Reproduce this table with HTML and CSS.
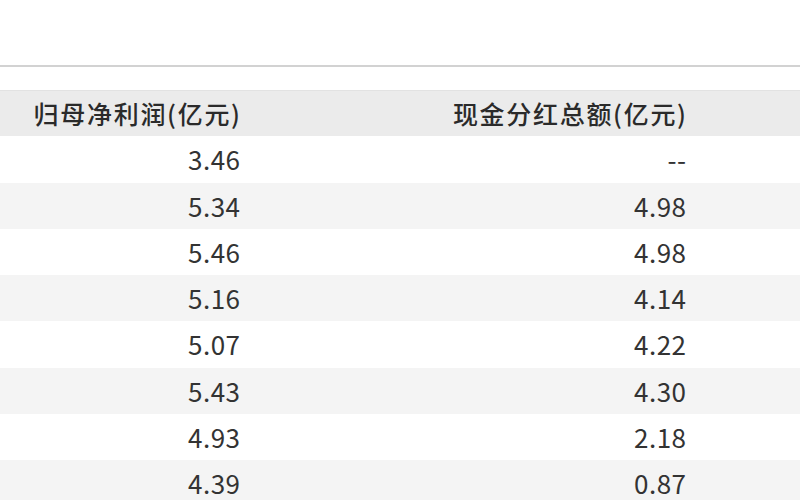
FILE: index.html
```html
<!DOCTYPE html>
<html lang="zh-CN">
<head>
<meta charset="utf-8">
<link rel="stylesheet" href="styles.css">
</head>
<body>
<div class="page">
  <div class="top"></div>
  <div class="rule"></div>
  <div class="table">
    <div class="row head"><div class="c1">归母净利润(亿元)</div><div class="c2">现金分红总额(亿元)</div><div class="c3"></div></div>
    <div class="row"><div class="c1">3.46</div><div class="c2">--</div><div class="c3"></div></div>
    <div class="row alt"><div class="c1">5.34</div><div class="c2">4.98</div><div class="c3"></div></div>
    <div class="row"><div class="c1">5.46</div><div class="c2">4.98</div><div class="c3"></div></div>
    <div class="row alt"><div class="c1">5.16</div><div class="c2">4.14</div><div class="c3"></div></div>
    <div class="row"><div class="c1">5.07</div><div class="c2">4.22</div><div class="c3"></div></div>
    <div class="row alt"><div class="c1">5.43</div><div class="c2">4.30</div><div class="c3"></div></div>
    <div class="row"><div class="c1">4.93</div><div class="c2">2.18</div><div class="c3"></div></div>
    <div class="row alt"><div class="c1">4.39</div><div class="c2">0.87</div><div class="c3"></div></div>
  </div>
</div>
</body>
</html>
```
FILE: styles.css
```css
html, body {
  margin: 0;
  padding: 0;
  background: #ffffff;
}
.page {
  width: 800px;
  height: 500px;
  overflow: hidden;
  font-family: "Noto Sans CJK SC", "Noto Sans", sans-serif;
  color: #333333;
}
.top {
  height: 65px;
}
.rule {
  height: 2px;
  background: #d2d2d2;
}
.table {
  margin-top: 23px;
}
.row {
  display: grid;
  grid-template-columns: 248px 446px 1fr;
  height: 46.25px;
  align-items: center;
  font-size: 26px;
  letter-spacing: 0.5px;
  line-height: 1;
}
.row > div {
  text-align: right;
  padding-right: 7.5px;
  white-space: nowrap;
}
.head {
  background: #ebebeb;
  border-top: 1px solid #e2e2e2;
  box-sizing: border-box;
  font-size: 25px;
  letter-spacing: 1.7px;
  font-weight: 500;
  color: #2a2a2a;
}
.head > div {
  padding-right: 6.3px;
}
.alt {
  background: #f4f4f4;
}
```
